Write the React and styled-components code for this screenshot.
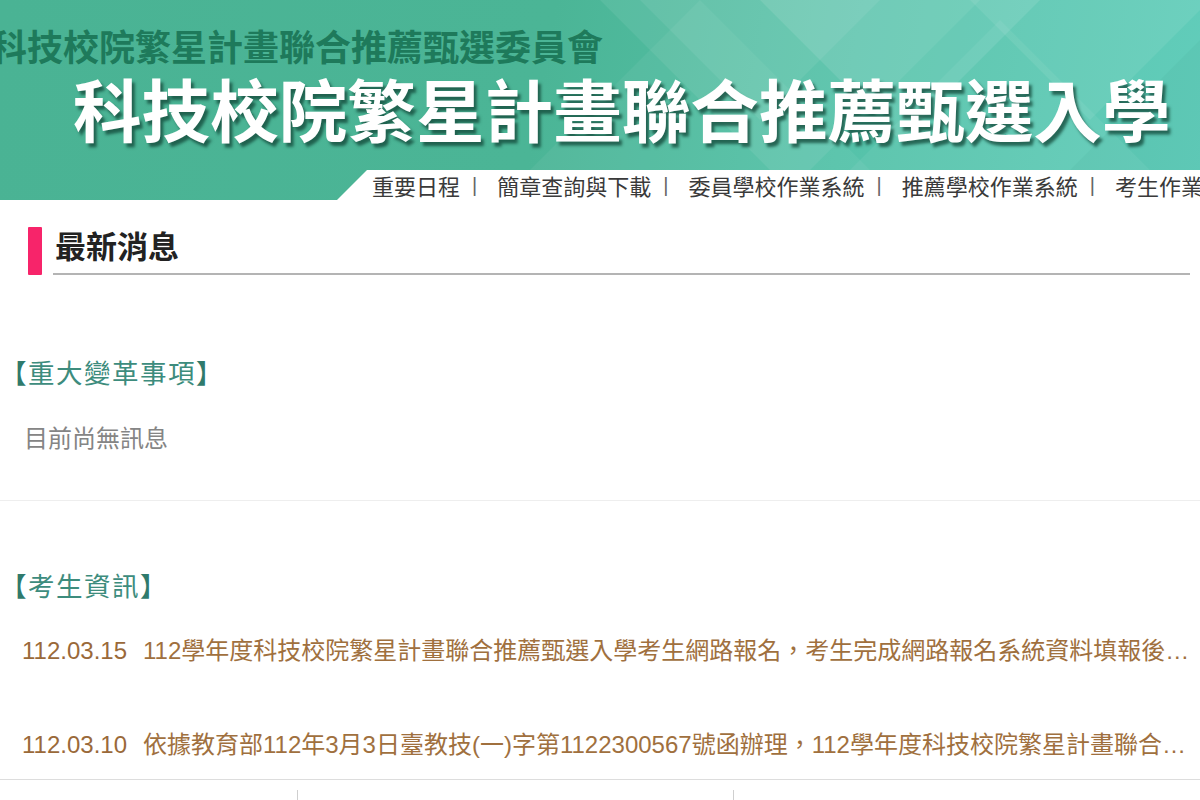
import React from 'react';
import styled, { createGlobalStyle } from 'styled-components';

const GlobalStyle = createGlobalStyle`
  html, body {
    margin: 0;
    padding: 0;
    background: #fff;
    overflow: hidden;
  }
  body {
    font-family: 'Liberation Sans', 'Noto Sans CJK TC', sans-serif;
  }
`;

const Page = styled.div`
  width: 1200px;
  overflow: hidden;
`;

const Banner = styled.header`
  position: relative;
  height: 200px;
  display: flex;
  flex-direction: column;
  overflow: hidden;
  background: linear-gradient(100deg, #4ab394 0%, #4bb596 45%, #55c2a9 70%, #62cdbb 100%);
`;

const Decor = styled.svg`
  position: absolute;
  inset: 0;
  width: 100%;
  height: 100%;
`;

const SubTitle = styled.div`
  position: relative;
  margin: 27px 0 0 -9px;
  font-family: 'Noto Sans CJK TC', sans-serif;
  font-size: 36px;
  line-height: 36px;
  font-weight: 700;
  color: #1e7a5b;
  white-space: nowrap;
`;

const MainTitle = styled.h1`
  position: relative;
  margin: 6px 0 0 73px;
  font-family: 'Noto Sans CJK TC', sans-serif;
  font-size: 68.6px;
  line-height: 76px;
  font-weight: 700;
  color: #fff;
  white-space: nowrap;
  text-shadow: 3px 4px 3px rgba(18, 70, 55, 0.75);
`;

const NavBar = styled.nav`
  position: relative;
  margin-top: auto;
  margin-left: 337px;
  height: 30px;
  padding-left: 35px;
  display: flex;
  align-items: center;
  background: #fff;
  white-space: nowrap;
  clip-path: polygon(30px 0, 100% 0, 100% 100%, 0 100%);
`;

const NavItem = styled.a`
  font-family: 'Noto Sans CJK TC', sans-serif;
  font-size: 22px;
  line-height: 30px;
  color: #3a3a3a;
  text-decoration: none;
`;

const NavSep = styled.span`
  font-size: 20px;
  color: #666;
  margin: 0 20px 0 12px;
`;

const NewsHeader = styled.div`
  display: flex;
  margin: 27px 10px 0 28px;
  height: 48px;
`;

const Marker = styled.div`
  width: 14px;
  background: #f7246a;
  border-radius: 1px;
`;

const HeaderTitle = styled.h2`
  flex: 1;
  margin: 0 0 0 11px;
  padding-left: 2px;
  border-bottom: 2px solid #b4b4b4;
  font-family: 'Noto Sans CJK TC', sans-serif;
  font-size: 31px;
  line-height: 36px;
  font-weight: 700;
  color: #222;
`;

const Section = styled.section`
  padding-top: ${({ $top }) => $top}px;
`;

const SectionTitle = styled.h3`
  margin: 0;
  font-family: 'Noto Sans CJK TC', sans-serif;
  font-size: 26.5px;
  line-height: 34px;
  font-weight: 400;
  letter-spacing: 1.5px;
  color: #3d8c7d;
`;

const Bracket = styled.span`
  color: #2f7a6c;
`;

const Empty = styled.p`
  margin: 31px 0 0 24px;
  font-family: 'Noto Sans CJK TC', sans-serif;
  font-size: 24px;
  line-height: 34px;
  color: #858585;
`;

const Divider = styled.hr`
  margin: ${({ $top }) => $top}px 0 0;
  border: 0;
  border-top: 1px solid ${({ $color }) => $color};
  height: 0;
`;

const NewsList = styled.ul`
  list-style: none;
  margin: 32px 0 0;
  padding: 0;
  display: flex;
  flex-direction: column;
  gap: 60px;
`;

const NewsRow = styled.li`
  padding-left: 22px;
  font-size: 24px;
  line-height: 34px;
  color: #a0703e;
  white-space: nowrap;
  overflow: hidden;
  text-overflow: ellipsis;
`;

const DateText = styled.span`
  margin-right: 16px;
  color: #9a6939;
`;

const Footer = styled.div`
  display: grid;
  grid-template-columns: 297px 436px 1fr;
  padding-top: 10px;
  height: 20px;
`;

const FooterCell = styled.div`
  border-left: ${({ $line }) => ($line ? '1px solid #cfcfcf' : 'none')};
`;

const navItems = ['重要日程', '簡章查詢與下載', '委員學校作業系統', '推薦學校作業系統', '考生作業系統'];

const news = [
  {
    date: '112.03.15',
    text: '112學年度科技校院繁星計畫聯合推薦甄選入學考生網路報名，考生完成網路報名系統資料填報後，請務必確認報名資料並列印報名表',
  },
  {
    date: '112.03.10',
    text: '依據教育部112年3月3日臺教技(一)字第1122300567號函辦理，112學年度科技校院繁星計畫聯合推薦甄選入學招生簡章修正',
  },
];

const BannerDecor = () => (
  <Decor viewBox="0 0 1200 200" preserveAspectRatio="none">
    <polygon points="560,-40 790,190 1020,-40" fill="#ffffff" opacity="0.07" />
    <polygon points="700,-60 900,140 1100,-60" fill="#ffffff" opacity="0.1" />
    <polygon points="820,200 1000,20 1180,200" fill="#ffffff" opacity="0.06" />
    <polygon points="500,200 700,0 900,200" fill="#ffffff" opacity="0.05" />
    <polygon points="940,-30 1090,120 1240,-30" fill="#ffffff" opacity="0.08" />
    <polygon points="1040,200 1200,40 1360,200" fill="#1a7a66" opacity="0.05" />
    <polygon points="640,0 760,120 880,0" fill="#ffffff" opacity="0.07" />
  </Decor>
);

export default function App() {
  return (
    <Page>
      <GlobalStyle />
      <Banner>
        <BannerDecor />
        <SubTitle>科技校院繁星計畫聯合推薦甄選委員會</SubTitle>
        <MainTitle>科技校院繁星計畫聯合推薦甄選入學</MainTitle>
        <NavBar>
          {navItems.map((item, i) => (
            <React.Fragment key={item}>
              <NavItem href="#">{item}</NavItem>
              {i < navItems.length - 1 && <NavSep>|</NavSep>}
            </React.Fragment>
          ))}
        </NavBar>
      </Banner>

      <NewsHeader>
        <Marker />
        <HeaderTitle>最新消息</HeaderTitle>
      </NewsHeader>

      <Section $top={80}>
        <SectionTitle>
          <Bracket>【</Bracket>重大變革事項<Bracket>】</Bracket>
        </SectionTitle>
        <Empty>目前尚無訊息</Empty>
      </Section>
      <Divider $top={46} $color="#eeeeee" />

      <Section $top={67}>
        <SectionTitle>
          <Bracket>【</Bracket>考生資訊<Bracket>】</Bracket>
        </SectionTitle>
        <NewsList>
          {news.map((n) => (
            <NewsRow key={n.date}>
              <DateText>{n.date}</DateText>
              {n.text}
            </NewsRow>
          ))}
        </NewsList>
      </Section>
      <Divider $top={17} $color="#dddddd" />

      <Footer>
        <FooterCell />
        <FooterCell $line />
        <FooterCell $line />
      </Footer>
    </Page>
  );
}
